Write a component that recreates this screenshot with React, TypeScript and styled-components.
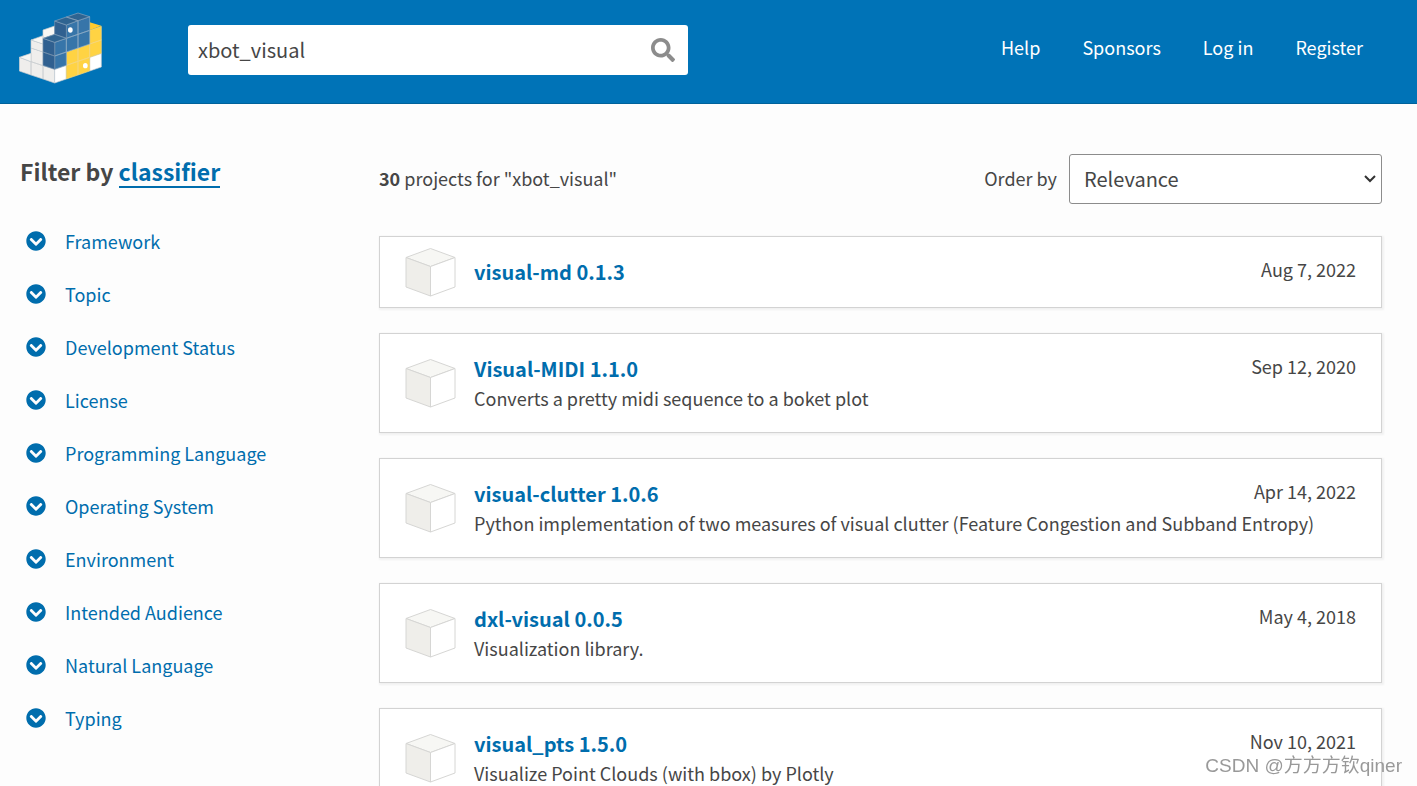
import React from "react";
import styled, { createGlobalStyle } from "styled-components";
import { FaChevronCircleDown, FaSearch } from "react-icons/fa";

const GlobalStyle = createGlobalStyle`
  *, *::before, *::after { box-sizing: border-box; }
  body {
    margin: 0;
    background: #fdfdfd;
    color: #464646;
    font-family: "Noto Sans CJK SC", "Noto Sans", sans-serif;
    font-size: 18px;
    line-height: 30px;
  }
  button, input, select { font: inherit; color: inherit; }
  a { color: #006dad; text-decoration: none; }
`;

const Header = styled.header`
  display: flex;
  align-items: center;
  height: 104px;
  padding: 0 33px 4px 19px;
  background: #0073b7;
  border-bottom: 1px solid #00629b;
`;

const LogoLink = styled.a`
  display: flex;
  flex: none;
  width: 169px;
  padding-bottom: 3px;
`;

const SearchForm = styled.form`
  display: flex;
  align-items: center;
  width: 500px;
  height: 50px;
  background: #fff;
  border-radius: 3px;
`;

const SearchInput = styled.input`
  flex: 1;
  min-width: 0;
  height: 100%;
  padding: 0 10px;
  border: 0;
  background: transparent;
  font-size: 20px;
  outline: none;
`;

const SearchButton = styled.button`
  display: flex;
  align-items: center;
  justify-content: center;
  width: 50px;
  height: 50px;
  padding: 0;
  border: 0;
  background: transparent;
  color: #8c8c8c;
  font-size: 24px;
`;

const Nav = styled.nav`
  display: flex;
  margin-left: auto;
  padding-bottom: 5px;
`;

const NavLink = styled.a`
  padding: 0 21px;
  color: #fff;
`;

const Page = styled.div`
  display: grid;
  grid-template-columns: 359px minmax(0, 1fr);
  padding: 50px 35px 25px 20px;
`;

const FilterTitle = styled.h2`
  margin: 0 0 38px;
  font-size: 23px;
  line-height: 34px;
  font-weight: 700;
`;

const ClassifierLink = styled.a`
  display: inline-block;
  line-height: 30px;
  border-bottom: 2px solid #006dad;
`;

const FilterList = styled.ul`
  display: flex;
  flex-direction: column;
  gap: 23px;
  margin: 0;
  padding: 0 0 0 6px;
  list-style: none;
`;

const FilterButton = styled.button`
  display: flex;
  align-items: center;
  gap: 19px;
  padding: 0;
  border: 0;
  background: transparent;
  color: #006dad;

  svg { flex: none; width: 20px; height: 20px; }
`;

const Toolbar = styled.div`
  display: flex;
  align-items: center;
  justify-content: space-between;
  height: 50px;
  margin-bottom: 32px;
`;

const Summary = styled.p`
  margin: 0;
  padding-bottom: 2px;

  strong { font-weight: 700; }
`;

const OrderForm = styled.form`
  display: flex;
  align-items: center;
  gap: 12px;
`;

const OrderLabel = styled.label`
  padding-bottom: 2px;
`;

const SelectBox = styled.div`
  display: grid;
  align-items: center;
  width: 313px;

  > * { grid-area: 1 / 1; }
  > svg { justify-self: end; margin-right: 6px; pointer-events: none; }
`;

const OrderSelect = styled.select`
  appearance: none;
  width: 100%;
  height: 50px;
  padding: 0 14px;
  border: 1px solid #8c8c8c;
  border-radius: 3px;
  background: #fff;
  font-size: 20px;
`;

const Results = styled.ul`
  display: flex;
  flex-direction: column;
  gap: 25px;
  margin: 0;
  padding: 0;
  list-style: none;
`;

const Card = styled.li`
  display: flex;
  align-items: center;
  gap: 18px;
  padding: 20px 25px;
  background: #fff;
  border: 1px solid #d3d3d3;
  box-shadow: 1px 1px 2px 1px rgba(0, 0, 0, 0.05);
`;

const CardBody = styled.div`
  flex: 1;
  min-width: 0;
`;

const CardHead = styled.div`
  display: flex;
  justify-content: space-between;
`;

const CardTitle = styled.h3`
  margin: 0;
  font-size: 20px;
  line-height: 30px;
  font-weight: 700;
`;

const CardDate = styled.time`
  line-height: 24px;
`;

const CardText = styled.p`
  margin: 0;
  line-height: 28px;
`;

const CubeIcon = styled.svg`
  flex: none;
  width: 51px;
  height: 50px;
  margin: -10px 0;
`;

const Watermark = styled.div`
  position: fixed;
  right: 15px;
  bottom: 6px;
  color: #999;
  font-family: "Liberation Sans", "Noto Sans CJK SC", sans-serif;
  font-size: 19px;
  line-height: 28px;
`;

const filters = [
  "Framework",
  "Topic",
  "Development Status",
  "License",
  "Programming Language",
  "Operating System",
  "Environment",
  "Intended Audience",
  "Natural Language",
  "Typing",
];

const projects = [
  { name: "visual-md", version: "0.1.3", date: "Aug 7, 2022", text: "" },
  { name: "Visual-MIDI", version: "1.1.0", date: "Sep 12, 2020", text: "Converts a pretty midi sequence to a boket plot" },
  {
    name: "visual-clutter",
    version: "1.0.6",
    date: "Apr 14, 2022",
    text: "Python implementation of two measures of visual clutter (Feature Congestion and Subband Entropy)",
  },
  { name: "dxl-visual", version: "0.0.5", date: "May 4, 2018", text: "Visualization library." },
  { name: "visual_pts", version: "1.5.0", date: "Nov 10, 2021", text: "Visualize Point Clouds (with bbox) by Plotly" },
];

function Logo() {
  return (
    <svg width="83" height="72" viewBox="56 38 249 216" aria-hidden="true">
      <g stroke="#c9cdd0" strokeWidth="2" strokeLinejoin="round">
        <path fill="#efeeec" d="M57 174L92 187V227L57 215zM92 187L128 199V239L92 227zM128 199L163 210V251L128 239zM92 146L128 158V199L92 187z" />
        <path fill="#efeeec" d="M92 122L128 134V158L92 146z" />
        <path fill="#f7f7f4" d="M57 174L92 162V187zM92 122L128 109V134zM128 92L163 80V105L128 117z" />
        <path fill="#fff" d="M163 210L198 198V239L163 251zM268 174L303 162V203L268 215z" />
        <path fill="#ffd343" stroke="#f3d685" d="M198 158L233 146V186L198 198zM233 146L268 134V174L233 186zM268 134L303 122V162L268 174zM198 198L233 186V227L198 239zM233 186L268 174V215L233 227zM268 93L303 81V122L268 134z" />
        <path fill="#ffcb2d" stroke="none" d="M268 69L303 79L268 93z" />
        <path fill="#3775a9" stroke="#91adc6" d="M163 129L198 117V158L163 170zM163 170L198 158V198L163 210zM198 117L233 105V146L198 158zM233 105L268 93V134L233 146zM198 77L233 64V105L198 117zM233 64L268 52V93L233 105z" />
        <path fill="#306090" stroke="#7793ae" d="M128 117L163 129V170L128 158zM128 158L163 170V210L128 198zM163 65L198 77V117L163 105z" />
        <path fill="#2f6491" stroke="#8ca5bc" d="M128 117L163 105L198 117L163 129zM163 65L198 53L233 64L198 77zM198 53L233 41L268 52L233 64z" />
      </g>
      <ellipse cx="210" cy="92" rx="7" ry="8" fill="#fff" />
      <ellipse cx="255" cy="199" rx="7" ry="8" fill="#fff" />
    </svg>
  );
}

function Cube() {
  return (
    <CubeIcon viewBox="0 0 51 50" aria-hidden="true">
      <g stroke="#d6d6d4" strokeWidth="1" strokeLinejoin="round">
        <path fill="#f7f7f4" d="M25.5 1.5L50 10.5L25.5 19.5L1 10.5z" />
        <path fill="#efeeea" d="M1 10.5L25.5 19.5V49L1 40z" />
        <path fill="#fff" d="M50 10.5L25.5 19.5V49L50 40z" />
      </g>
    </CubeIcon>
  );
}

export default function App() {
  return (
    <>
      <GlobalStyle />
      <Header>
        <LogoLink href="#" aria-label="PyPI home">
          <Logo />
        </LogoLink>
        <SearchForm role="search">
          <SearchInput type="text" aria-label="Search PyPI" defaultValue="xbot_visual" />
          <SearchButton type="button" aria-label="Search">
            <FaSearch />
          </SearchButton>
        </SearchForm>
        <Nav aria-label="Main navigation">
          {["Help", "Sponsors", "Log in", "Register"].map((label) => (
            <NavLink key={label} href="#">
              {label}
            </NavLink>
          ))}
        </Nav>
      </Header>
      <Page>
        <aside>
          <FilterTitle>
            Filter by <ClassifierLink href="#">classifier</ClassifierLink>
          </FilterTitle>
          <FilterList>
            {filters.map((label) => (
              <li key={label}>
                <FilterButton type="button">
                  <FaChevronCircleDown />
                  {label}
                </FilterButton>
              </li>
            ))}
          </FilterList>
        </aside>
        <main>
          <Toolbar>
            <Summary>
              <strong>30</strong> projects for "xbot_visual"
            </Summary>
            <OrderForm>
              <OrderLabel htmlFor="order">Order by</OrderLabel>
              <SelectBox>
                <OrderSelect id="order" defaultValue="Relevance">
                  <option>Relevance</option>
                  <option>Date last updated</option>
                  <option>Trending</option>
                </OrderSelect>
                <svg width="12" height="8" viewBox="0 0 12 8" aria-hidden="true">
                  <path d="M1 1L6 6L11 1" fill="none" stroke="#333" strokeWidth="2" />
                </svg>
              </SelectBox>
            </OrderForm>
          </Toolbar>
          <Results>
            {projects.map((p) => (
              <Card key={p.name}>
                <Cube />
                <CardBody>
                  <CardHead>
                    <CardTitle>
                      <a href="#">
                        {p.name} {p.version}
                      </a>
                    </CardTitle>
                    <CardDate>{p.date}</CardDate>
                  </CardHead>
                  {p.text && <CardText>{p.text}</CardText>}
                </CardBody>
              </Card>
            ))}
          </Results>
        </main>
      </Page>
      <Watermark>CSDN @方方方钦qiner</Watermark>
    </>
  );
}
